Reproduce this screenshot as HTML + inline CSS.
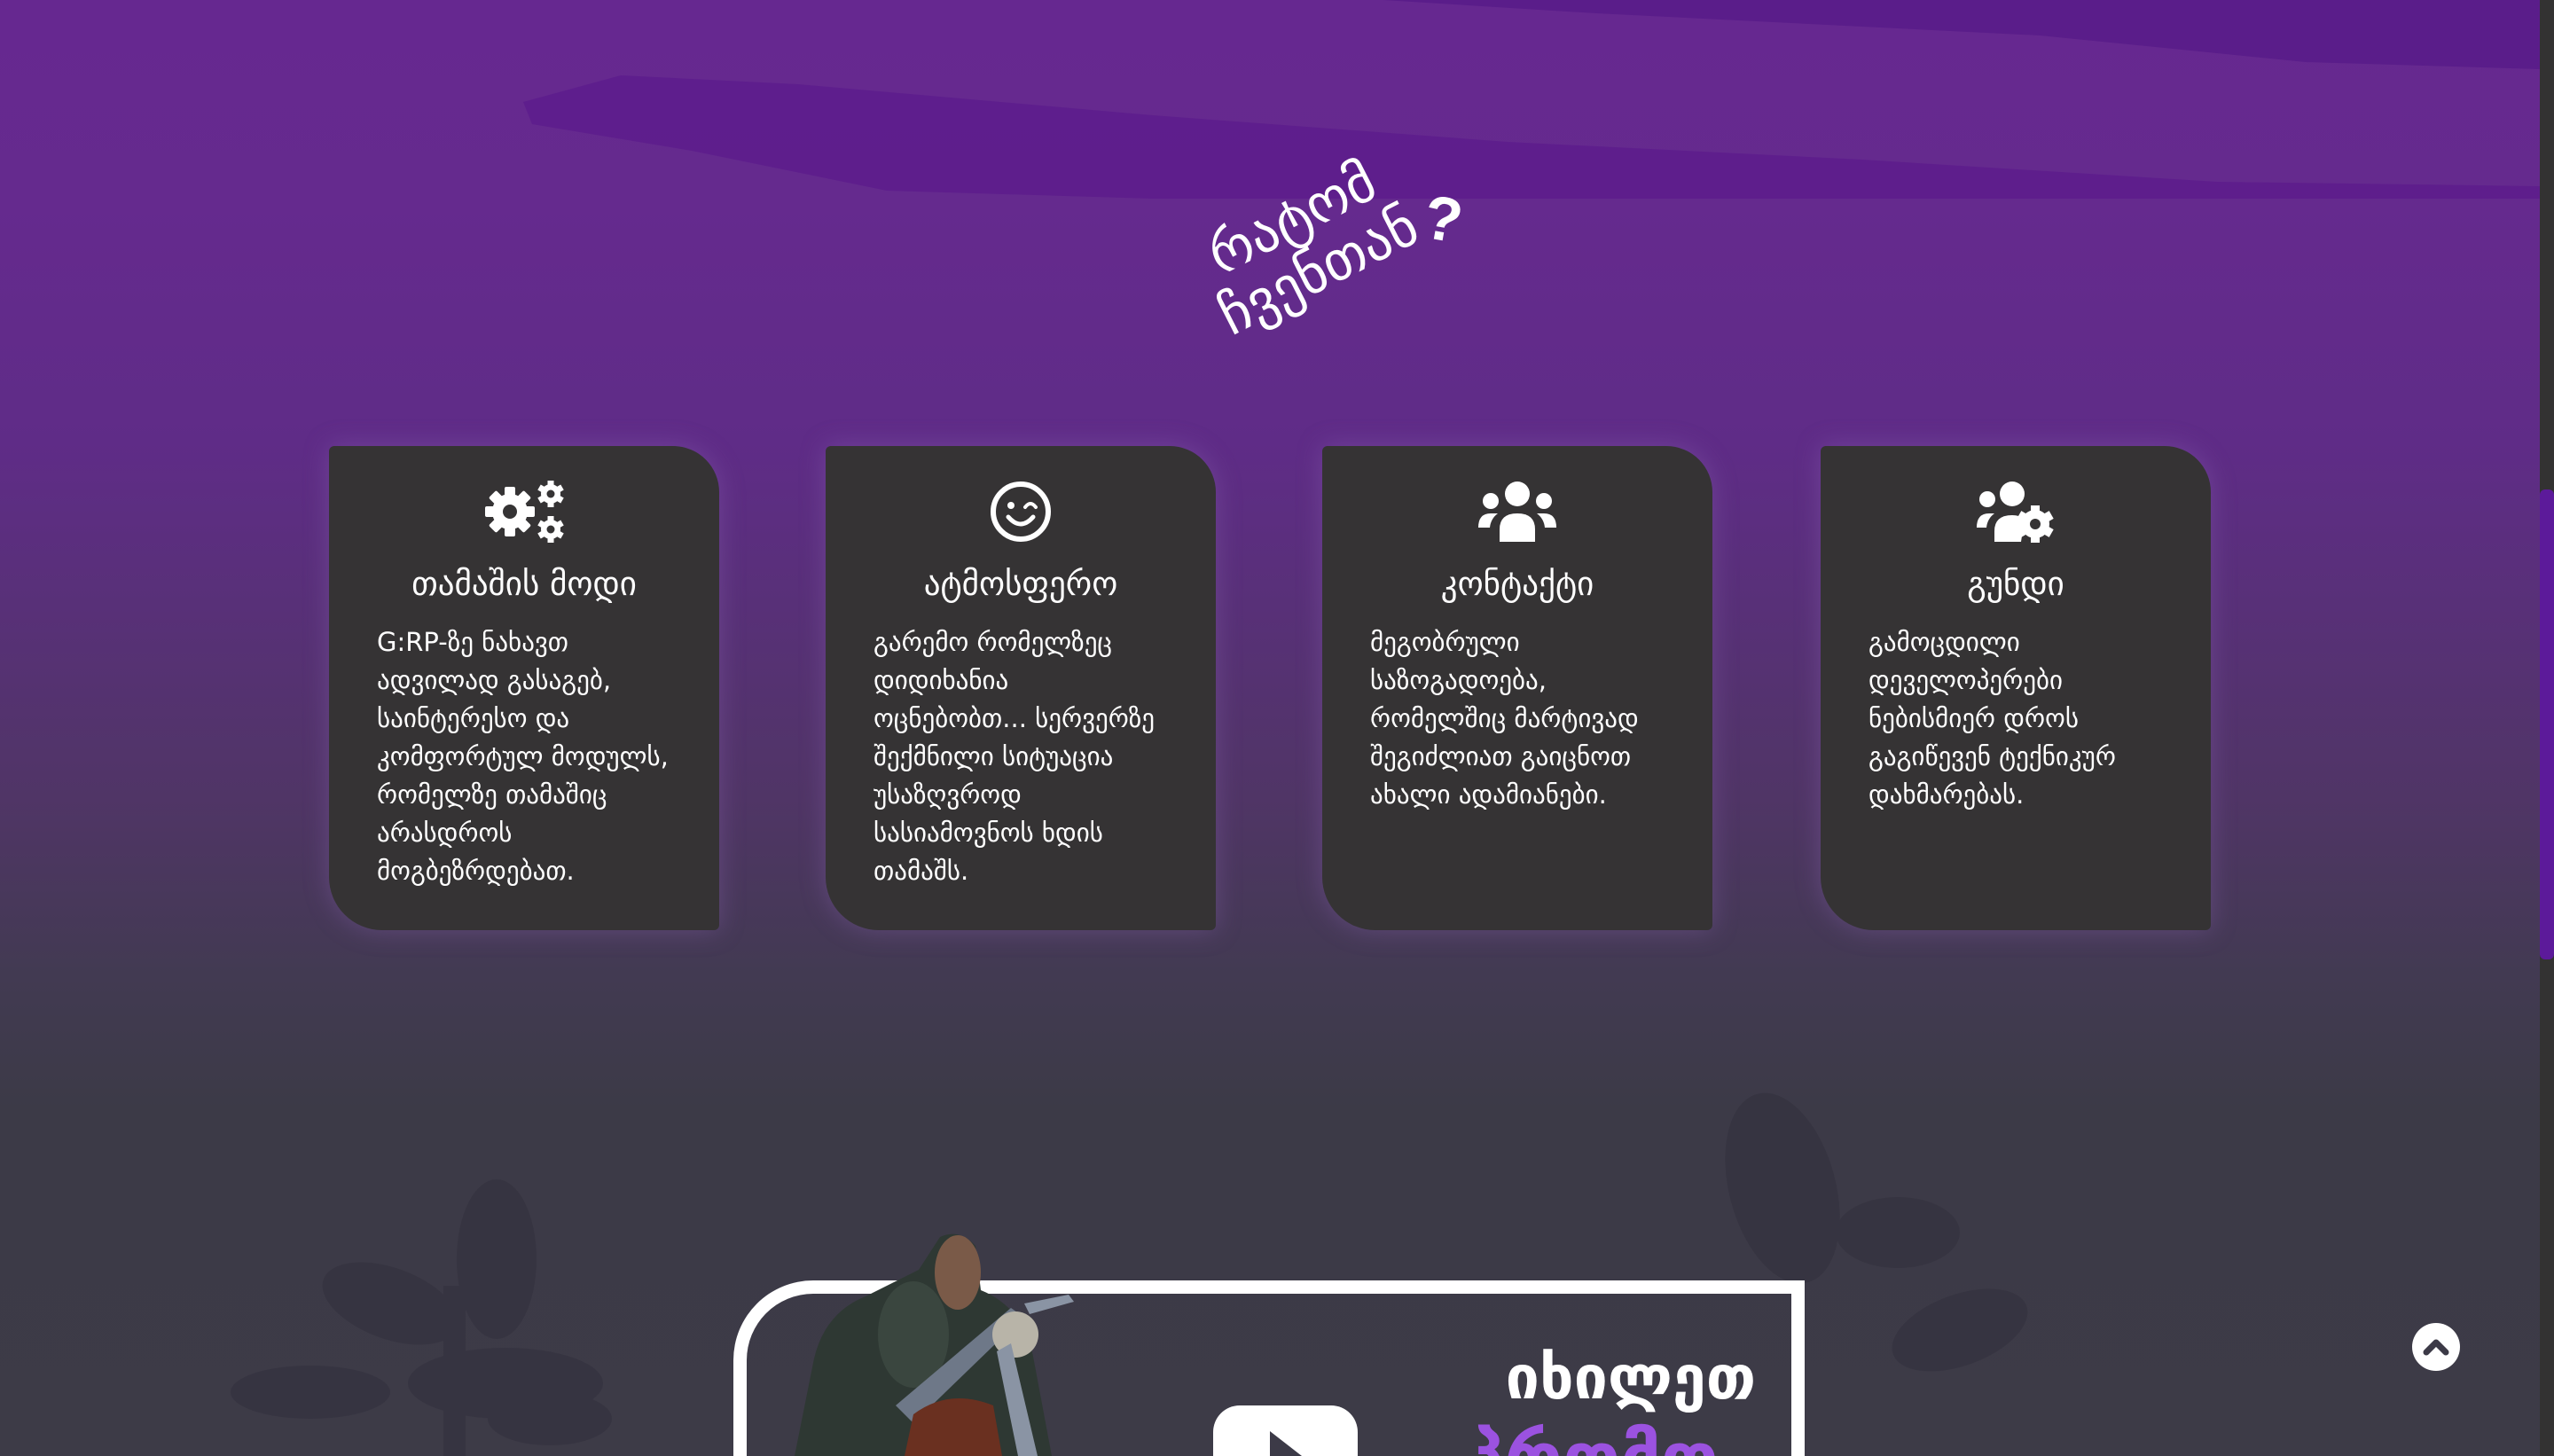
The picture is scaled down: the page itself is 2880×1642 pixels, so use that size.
<!DOCTYPE html>
<html><head><meta charset="utf-8">
<style>
html{margin:0;padding:0;width:2880px;height:1642px;overflow:hidden;background:#3d3b47;}
body{margin:0;padding:0;width:2880px;height:1642px;overflow:hidden;position:relative;
background:linear-gradient(to bottom,#662890 0px,#652a8e 230px,#5f2c87 500px,#503566 900px,#423a52 1100px,#3c3a47 1250px,#3d3b47 1642px);
font-family:"DejaVu Sans","Liberation Sans",sans-serif;color:#fff;}
.bgsvg{position:absolute;left:0;top:0;}
.title{position:absolute;left:1282px;top:210px;width:380px;text-align:center;transform:rotate(-27deg);transform-origin:center;
font-size:62px;line-height:66px;color:#fff;}
.q{position:absolute;left:1606px;top:207px;font-size:70px;font-weight:bold;font-family:"Liberation Sans",sans-serif;transform:rotate(10deg);}
.card{position:absolute;top:503px;width:440px;height:546px;background:#353334;border-radius:6px 52px 6px 60px;
box-shadow:0 0 28px rgba(150,110,190,0.35);}
.card .ic{position:absolute;left:0;right:0;top:38px;height:80px;display:flex;justify-content:center;}
.card h3{position:absolute;left:0;right:0;top:134px;margin:0;text-align:center;font-weight:normal;font-size:37px;}
.card p{position:absolute;left:54px;top:200px;margin:0;font-size:29px;line-height:43px;white-space:nowrap;}
.sb{position:absolute;left:2864px;top:0;width:16px;height:1642px;background:#333232;}
.thumb{position:absolute;left:2864px;top:552px;width:16px;height:530px;background:#5c1a9a;border-radius:6px;}
.top{position:absolute;left:2720px;top:1492px;width:54px;height:54px;border-radius:50%;background:#fff;}
.vbox{position:absolute;left:827px;top:1444px;width:1208px;height:198px;border:15px solid #fff;border-bottom:none;border-radius:90px 0 0 0;box-sizing:border-box;}
.yt{position:absolute;left:1368px;top:1585px;width:163px;height:57px;background:#fff;border-radius:30px 30px 0 0;}
.t1{position:absolute;right:900px;top:1515px;font-size:68px;font-weight:bold;color:#fff;}
.t2{position:absolute;left:1652px;top:1598px;font-size:80px;font-weight:bold;color:#9b52e0;}
</style></head><body>
<svg class="bgsvg" width="2880" height="1642" viewBox="0 0 2880 1642">
 <polygon points="1560,0 2864,0 2864,78 2600,70 2300,40 1800,15" fill="#5a1d8a"/>
 <polygon points="590,115 700,85 900,95 1300,130 1700,160 2100,180 2500,205 2864,210 2864,224 1300,224 1000,215 780,170 600,140" fill="#5c1c8c" opacity="0.8"/>
 <g fill="#302e3b" opacity="0.45">
  <ellipse cx="440" cy="1470" rx="80" ry="40" transform="rotate(20 440 1470)"/>
  <ellipse cx="560" cy="1420" rx="45" ry="90"/>
  <ellipse cx="570" cy="1560" rx="110" ry="40"/>
  <ellipse cx="350" cy="1570" rx="90" ry="30"/>
  <ellipse cx="620" cy="1600" rx="70" ry="30"/>
  <rect x="500" y="1450" width="25" height="200"/>
  <ellipse cx="2010" cy="1340" rx="60" ry="110" transform="rotate(-15 2010 1340)"/>
  <ellipse cx="2140" cy="1390" rx="70" ry="40"/>
  <ellipse cx="2210" cy="1500" rx="80" ry="40" transform="rotate(-20 2210 1500)"/>
 </g>
</svg>
<div class="title">რატომ<br>ჩვენთან</div>
<div class="q">?</div>

<div class="card" style="left:371px">
 <div class="ic"><svg width="92" height="72" viewBox="0 0 92 72" fill="#fff">
  <circle cx="30" cy="36" r="20"/>
  <g transform="translate(30 36)"><rect x="-6" y="-28" width="12" height="56" rx="2"/><rect x="-6" y="-28" width="12" height="56" rx="2" transform="rotate(45)"/><rect x="-6" y="-28" width="12" height="56" rx="2" transform="rotate(90)"/><rect x="-6" y="-28" width="12" height="56" rx="2" transform="rotate(135)"/></g>
  <circle cx="30" cy="36" r="8" fill="#353334"/>
  <g transform="translate(76 16)"><circle r="11"/><rect x="-3.5" y="-15" width="7" height="30"/><rect x="-3.5" y="-15" width="7" height="30" transform="rotate(60)"/><rect x="-3.5" y="-15" width="7" height="30" transform="rotate(120)"/><circle r="4.5" fill="#353334"/></g>
  <g transform="translate(76 56)"><circle r="11"/><rect x="-3.5" y="-15" width="7" height="30"/><rect x="-3.5" y="-15" width="7" height="30" transform="rotate(60)"/><rect x="-3.5" y="-15" width="7" height="30" transform="rotate(120)"/><circle r="4.5" fill="#353334"/></g>
 </svg></div>
 <h3>თამაშის მოდი</h3>
 <p>G:RP-ზე ნახავთ<br>ადვილად გასაგებ,<br>საინტერესო და<br>კომფორტულ მოდულს,<br>რომელზე თამაშიც<br>არასდროს<br>მოგბეზრდებათ.</p>
</div>

<div class="card" style="left:931px">
 <div class="ic"><svg width="72" height="72" viewBox="0 0 72 72" fill="none" stroke="#fff">
  <circle cx="36" cy="36" r="31" stroke-width="6"/>
  <circle cx="25" cy="29" r="4" fill="#fff" stroke="none"/>
  <path d="M41 31 q6 -8 12 0" stroke-width="4" stroke-linecap="round"/>
  <path d="M22 42 q14 16 28 0" stroke-width="5" stroke-linecap="round"/>
 </svg></div>
 <h3>ატმოსფერო</h3>
 <p>გარემო რომელზეც<br>დიდიხანია<br>ოცნებობთ... სერვერზე<br>შექმნილი სიტუაცია<br>უსაზღვროდ<br>სასიამოვნოს ხდის<br>თამაშს.</p>
</div>

<div class="card" style="left:1491px">
 <div class="ic"><svg width="92" height="72" viewBox="0 0 92 72" fill="#fff">
  <circle cx="46" cy="16" r="14"/><circle cx="16" cy="24" r="9"/><circle cx="76" cy="24" r="9"/>
  <path d="M26 70 v-14 q0-18 20-18 q20 0 20 18 v14 z"/>
  <path d="M2 54 q0-16 14-16 h8 q-8 6-9 16 z"/><path d="M90 54 q0-16-14-16 h-8 q8 6 9 16 z"/>
 </svg></div>
 <h3>კონტაქტი</h3>
 <p>მეგობრული<br>საზოგადოება,<br>რომელშიც მარტივად<br>შეგიძლიათ გაიცნოთ<br>ახალი ადამიანები.</p>
</div>

<div class="card" style="left:2053px">
 <div class="ic"><svg width="92" height="72" viewBox="0 0 92 72" fill="#fff">
  <circle cx="14" cy="22" r="9"/><circle cx="42" cy="16" r="14"/>
  <path d="M2 54 q0-16 14-16 h6 q-8 6-9 16 z"/>
  <path d="M22 70 v-12 q0-18 20-18 q8 0 14 4 l-4 26 z"/>
  <g transform="translate(68 50)"><circle r="16"/><rect x="-5" y="-21" width="10" height="42"/><rect x="-5" y="-21" width="10" height="42" transform="rotate(60)"/><rect x="-5" y="-21" width="10" height="42" transform="rotate(120)"/><circle r="6" fill="#353334"/></g>
 </svg></div>
 <h3>გუნდი</h3>
 <p>გამოცდილი<br>დეველოპერები<br>ნებისმიერ დროს<br>გაგიწევენ ტექნიკურ<br>დახმარებას.</p>
</div>

<div class="vbox"></div>
<svg style="position:absolute;left:870px;top:1355px" width="440" height="287" viewBox="0 0 440 287">
 <path d="M190 40 q22 -10 40 10 l6 50 q50 20 60 80 l20 107 -290 0 20 -100 q10 -60 60 -80 l60 -30 z" fill="#2e3833"/>
 <ellipse cx="160" cy="150" rx="40" ry="60" fill="#3a463f"/>
 <ellipse cx="210" cy="80" rx="26" ry="42" fill="#7a5a48"/>
 <path d="M140 230 l130 -110 14 10 -124 120 z" fill="#6e7888"/>
 <circle cx="275" cy="150" r="26" fill="#b8b4a8"/>
 <path d="M160 240 q40 -30 90 -10 l10 57 -110 0 z" fill="#6a3020"/>
 <path d="M270 160 l30 127 -22 0 -24 -118 z" fill="#8a94a4"/>
 <path d="M285 115 l50 -10 6 8 -50 14 z" fill="#8a94a4"/>
</svg>
<div class="yt"></div>
<svg style="position:absolute;left:1432px;top:1614px" width="40" height="28"><path d="M0 0 L0 28 L36 28 Z" fill="#3c3a47"/></svg>
<div class="t1">იხილეთ</div>
<div class="t2">პრომო</div>

<div class="top"><svg width="54" height="54" viewBox="0 0 54 54"><path d="M16 33 L27 22 L38 33" fill="none" stroke="#3c3a47" stroke-width="7" stroke-linecap="round" stroke-linejoin="round"/></svg></div>
<div class="sb"></div><div class="thumb"></div>
</body></html>
